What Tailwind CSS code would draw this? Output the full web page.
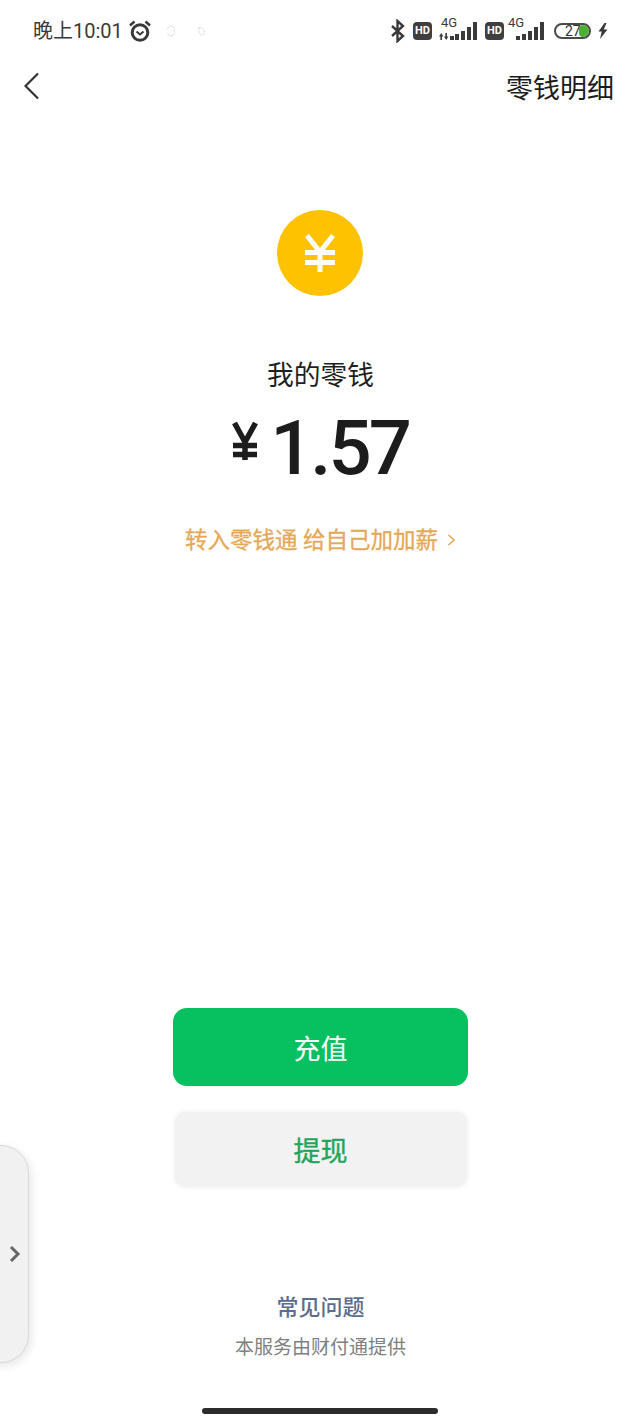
<!doctype html>
<html lang="zh">
    <head>
        <meta charset="utf-8" />
        <title>我的零钱</title>
        <script src="https://cdn.jsdelivr.net/npm/@tailwindcss/browser@4"></script>
    </head>
    <body class="relative w-[641px] h-[1424px] overflow-hidden bg-white font-['Roboto','Noto_Sans_CJK_SC',sans-serif]">
        <!-- status bar -->
        <div class="h-[62px] pl-[33px] pr-[33px] flex items-center justify-between text-[#3a3a3a]">
            <div class="flex items-center">
                <span class="text-[20px] leading-none">晚上10:01</span>
                <svg class="ml-[5px]" width="24" height="24" viewBox="0 0 24 24" fill="none" stroke="#3a3a3a">
                    <circle cx="12" cy="13.500" r="7.800" stroke-width="3" />
                    <path d="M8.500 12.500l3.500 3 3.500-3" stroke-width="2" />
                    <path d="M2 6.500L6.500 2.500M22 6.500L17.500 2.500" stroke-width="2.400" />
                </svg>
                <svg class="ml-[14px]" width="10" height="12" viewBox="0 0 12 12" fill="none" stroke="#d8d8d8" stroke-width="1.200">
                    <path d="M2 4a4 4 0 0 1 8 0v4a4 4 0 0 1-8 0" stroke-dasharray="3 1" />
                </svg>
                <svg class="ml-[20px]" width="10" height="12" viewBox="0 0 12 12" fill="none" stroke="#d8d8d8" stroke-width="1.200">
                    <path d="M3 2h4l3 3v3a3 3 0 0 1-6 0z" stroke-dasharray="3 1" />
                </svg>
            </div>
            <div class="flex items-center">
                <svg width="16" height="24" viewBox="0 0 16 24" fill="none" stroke="#3a3a3a" stroke-width="2.400">
                    <path d="M2 7l11 10-5.500 5V2L13 7 2 17" />
                </svg>
                <span class="ml-[7px] w-[19px] h-[18px] rounded-[4px] bg-[#3f3f3f] text-white text-[11px] font-bold leading-[18px] text-center">HD</span>
                <div class="ml-[7px] w-[39px] h-[24px] relative">
                    <span class="absolute left-[2px] -top-[3px] text-[13px] leading-[14px]">4G</span>
                    <svg class="absolute left-0 top-0" width="39" height="24" viewBox="0 0 39 24" fill="#3a3a3a">
                        <path d="M0 17.500l2.200-3.500 2.200 3.500H3V21H1.400v-3.500zM5 17.500h1.400V14H8v3.500h1.400L7.200 21z" />
                        <path d="M11 17h4v4h-4zM16 15h4v6h-4zM22 12h4v9h-4zM28 8h4v13h-4zM34 3h4v18h-4z" />
                    </svg>
                </div>
                <span class="ml-[7px] w-[19px] h-[18px] rounded-[4px] bg-[#3f3f3f] text-white text-[11px] font-bold leading-[18px] text-center">HD</span>
                <div class="ml-[10px] w-[31px] h-[24px] relative">
                    <span class="absolute -left-[6px] -top-[3px] text-[13px] leading-[14px]">4G</span>
                    <svg class="absolute left-0 top-0" width="31" height="24" viewBox="0 0 31 24" fill="#3a3a3a">
                        <path d="M2 17h4v4H2zM8 15h4v6H8zM14 12h4v9h-4zM20 8h4v13h-4zM26 3h4v18h-4z" />
                    </svg>
                </div>
                <div class="relative ml-[9px] w-[37px] h-[16px] rounded-full border-2 border-[#4a4a4a] overflow-hidden">
                    <div class="absolute left-[23px] top-0 w-[11px] h-full bg-[#4cb035] rounded-l-[4px]"></div>
                    <span class="absolute left-[9px] -top-[2px] text-[14px] leading-[16px] text-[#333]">27</span>
                </div>
                <svg class="ml-[7px]" width="10" height="16" viewBox="0 0 10 16" fill="#3a3a3a">
                    <path d="M6.500 0L0.500 8.500h3.200L2 16l7.500-9.500H5.800L8.500 0z" />
                </svg>
            </div>
        </div>

        <!-- nav -->
        <div class="h-[52px] pl-[24px] pr-[27px] flex items-center justify-between">
            <svg class="-mt-[4px]" width="16" height="28" viewBox="0 0 16 28" fill="none" stroke="#333" stroke-width="2.200">
                <path d="M14 1.500L1.500 14 14 26.500" />
            </svg>
            <span class="pt-[2px] text-[27px] leading-none text-[#1c1c1c]">零钱明细</span>
        </div>

        <!-- balance -->
        <div class="pt-[96px] flex flex-col items-center">
            <div class="-ml-[1px] w-[86px] h-[86px] rounded-full bg-[#fec200] flex items-center justify-center">
                <svg width="32" height="38" viewBox="0 0 32 38" fill="none" stroke="#fff" stroke-width="5">
                    <path d="M3 1.500L16 18 29 1.500M16 16v22M1 18.500h30M1 28.500h30" />
                </svg>
            </div>
            <p class="mt-[63px] text-[26.750px] leading-[34px] text-[#1f1f1f]">我的零钱</p>
            <div class="mt-[17px] h-[76px] flex items-center text-[#1c1c1c]">
                <svg class="mr-[12px] -mt-[14px]" width="26" height="38" viewBox="0 0 26 38" fill="none" stroke="#1c1c1c" stroke-width="5.500">
                    <path d="M2.500 1L13 20 23.500 1M13 18v20M1 23.500h24M1 32.500h24" />
                </svg>
                <span class="text-[76px] leading-none font-medium tracking-[-3px]">1.57</span>
            </div>
            <div class="mt-[39px] flex items-center text-[#e5a857] text-[22.500px] leading-[30px] [-webkit-text-stroke:0.3px_#e5a857]">
                <span>转入零钱通&nbsp;给自己加加薪</span>
                <svg class="ml-[9px]" width="9" height="14" viewBox="0 0 9 14" fill="none" stroke="#e5a857" stroke-width="1.600">
                    <path d="M1.500 2l5.500 5-5.500 5" />
                </svg>
            </div>
        </div>

        <!-- actions -->
        <div class="absolute inset-x-0 top-[1008px] flex flex-col items-center">
            <button class="w-[295px] h-[78px] pt-[6px] rounded-[14px] bg-[#07c160] text-white text-[27px]">充值</button>
            <button class="mt-[26px] w-[292px] h-[75px] pt-[6px] rounded-[10px] bg-[#f2f2f2] text-[#1fa65c] text-[27px] [-webkit-text-stroke:0.4px_#1fa65c] shadow-[0_0_5px_rgba(0,0,0,0.08)]">提现</button>
            <p class="mt-[107px] text-[22px] leading-[28px] font-medium text-[#5d6d8e]">常见问题</p>
            <p class="mt-[13px] text-[19px] leading-[26px] text-[#808080]">本服务由财付通提供</p>
        </div>

        <!-- side panel -->
        <div class="absolute -left-[30px] top-[1145px] w-[59px] h-[218px] rounded-[28px] bg-[#f1f1f1] border border-[#d9d9d9] shadow-[2px_3px_10px_rgba(0,0,0,0.1)] flex items-center justify-end pr-[7px]">
            <svg width="12" height="18" viewBox="0 0 12 18" fill="none" stroke="#666" stroke-width="3">
                <path d="M2 2l7 7-7 7" />
            </svg>
        </div>

        <!-- home bar -->
        <div class="absolute left-[202px] top-[1408px] w-[236px] h-[6px] rounded-full bg-[#2b2b2b]"></div>
    </body>
</html>
